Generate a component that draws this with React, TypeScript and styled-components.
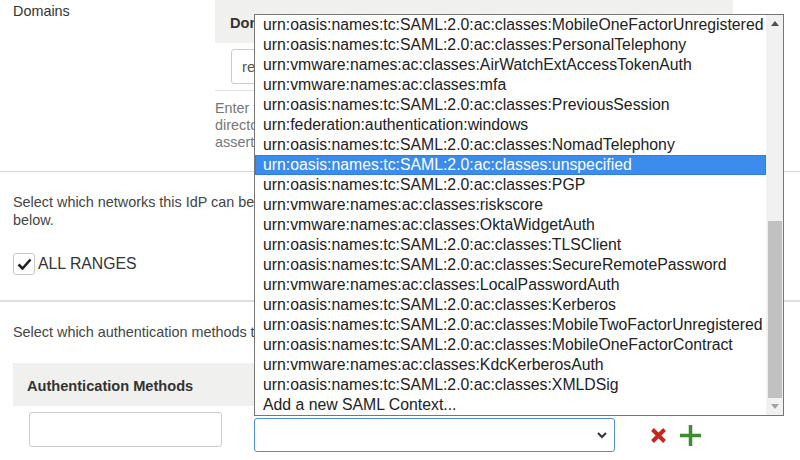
import styled, { createGlobalStyle, css } from 'styled-components'

const GlobalStyle = createGlobalStyle`
  html, body {
    margin: 0;
    padding: 0;
    background: #fff;
  }
  body {
    font-family: 'Liberation Sans', Arial, sans-serif;
    color: #333;
  }
`

const contexts = [
  'urn:oasis:names:tc:SAML:2.0:ac:classes:MobileOneFactorUnregistered',
  'urn:oasis:names:tc:SAML:2.0:ac:classes:PersonalTelephony',
  'urn:vmware:names:ac:classes:AirWatchExtAccessTokenAuth',
  'urn:vmware:names:ac:classes:mfa',
  'urn:oasis:names:tc:SAML:2.0:ac:classes:PreviousSession',
  'urn:federation:authentication:windows',
  'urn:oasis:names:tc:SAML:2.0:ac:classes:NomadTelephony',
  'urn:oasis:names:tc:SAML:2.0:ac:classes:unspecified',
  'urn:oasis:names:tc:SAML:2.0:ac:classes:PGP',
  'urn:vmware:names:ac:classes:riskscore',
  'urn:vmware:names:ac:classes:OktaWidgetAuth',
  'urn:oasis:names:tc:SAML:2.0:ac:classes:TLSClient',
  'urn:oasis:names:tc:SAML:2.0:ac:classes:SecureRemotePassword',
  'urn:vmware:names:ac:classes:LocalPasswordAuth',
  'urn:oasis:names:tc:SAML:2.0:ac:classes:Kerberos',
  'urn:oasis:names:tc:SAML:2.0:ac:classes:MobileTwoFactorUnregistered',
  'urn:oasis:names:tc:SAML:2.0:ac:classes:MobileOneFactorContract',
  'urn:vmware:names:ac:classes:KdcKerberosAuth',
  'urn:oasis:names:tc:SAML:2.0:ac:classes:XMLDSig',
  'Add a new SAML Context...',
]

const Page = styled.div`
  position: relative;
  width: 800px;
  height: 460px;
  overflow: hidden;
`

const DomainsSection = styled.section`
  display: grid;
  grid-template-columns: 215px 518px;
  height: 171px;
  border-bottom: 1px solid #d9d9d9;
`

const FieldLabel = styled.div`
  padding: 3px 0 0 13px;
  font-size: 14.4px;
  line-height: 17px;
`

const TableHead = styled.div<{ indent?: number }>`
  height: 43px;
  background: #f0f1ef;
  display: flex;
  align-items: center;
  justify-content: space-between;
  padding: 2px 12px 0 ${({ indent }) => indent ?? 15}px;
  box-sizing: border-box;
  font-size: 14.6px;
  font-weight: bold;
  color: #333;
`

const InputRow = styled.div`
  padding: 6px 0 6px 16px;
  border-bottom: 1px solid #e2e2e2;
`

const TextInput = styled.input<{ w: number }>`
  ${({ w }) => css`
    width: ${w}px;
  `}
  height: 35px;
  box-sizing: border-box;
  border: 1px solid #ccc;
  border-radius: 3px;
  padding: 0 10px;
  font-family: inherit;
  font-size: 15px;
  color: #555;
`

// clipped at the open dropdown's edge, where the reference cuts these texts
const Clip = styled.div<{ w: number }>`
  width: ${({ w }) => w}px;
  overflow: hidden;
  white-space: nowrap;
`

const HelpText = styled.p`
  margin: 0;
  padding-top: 9px;
  font-size: 14.4px;
  line-height: 17px;
  color: #777;
`

const NetworksSection = styled.section`
  height: 130px;
  padding: 21px 13px 0;
  box-sizing: border-box;
  border-bottom: 2px solid #dedede;
`

const Intro = styled.p`
  margin: 0;
  font-size: 14.4px;
  line-height: 18px;
  color: #444;
`

const CheckRow = styled.label`
  display: flex;
  align-items: center;
  gap: 3px;
  margin-top: 24px;
  font-size: 15.8px;
  color: #333;
`

const CheckBox = styled.span`
  width: 22px;
  height: 22px;
  box-sizing: border-box;
  border: 1px solid #c8c8c8;
  border-radius: 3px;
  display: flex;
  align-items: center;
  justify-content: center;
  background: #fff;
`

const AuthSection = styled.section`
  padding: 21px 13px 0;
`

const MethodsHead = styled(TableHead)`
  margin-top: 22px;
  width: 720px;
`

const MethodRow = styled.div`
  display: flex;
  align-items: flex-start;
  padding-left: 16px;
  margin-top: 6px;
`

const SelectBox = styled.div`
  margin: 6px 0 0 32px;
  width: 361px;
  height: 34px;
  box-sizing: border-box;
  border: 1px solid #4d90e0;
  border-radius: 3px;
  display: flex;
  align-items: center;
  justify-content: flex-end;
  padding-right: 6px;
`

const RowActions = styled.div`
  display: flex;
  align-items: center;
  gap: 13px;
  margin: 13px 0 0 35px;
`

const Dropdown = styled.div`
  position: absolute;
  left: 254px;
  top: 14px;
  width: 530px;
  height: 402px;
  box-sizing: border-box;
  border: 1px solid #767676;
  background: #fff;
  display: flex;
`

const OptionList = styled.ul`
  list-style: none;
  margin: 0;
  padding: 0;
  flex: 1;
`

const Option = styled.li<{ selected?: boolean }>`
  height: 20px;
  line-height: 20px;
  padding-left: 8px;
  font-size: 15.8px;
  white-space: nowrap;
  overflow: hidden;
  color: #222;
  ${({ selected }) =>
    selected &&
    css`
      background: #3b8cec;
      color: #fff;
      box-shadow: inset 0 0 0 1px #2f7fe0;
    `}
`

const ScrollTrack = styled.div`
  width: 17px;
  background: #f1f1f1;
  display: flex;
  flex-direction: column;
  align-items: center;
`

const ScrollArrow = styled.div`
  height: 17px;
  display: flex;
  align-items: center;
  justify-content: center;
`

const ScrollThumb = styled.div`
  width: 14px;
  height: 177px;
  margin-top: auto;
  background: #c1c1c1;
`

const Chevron = () => (
  <svg width="12" height="8" viewBox="0 0 12 8">
    <path d="M2 2l4 4 4-4" fill="none" stroke="#333" strokeWidth="2" />
  </svg>
)

const RemoveIcon = () => (
  <svg width="17" height="17" viewBox="0 0 17 17">
    <path d="M2.5 2.5l12 12M14.5 2.5l-12 12" stroke="#c8261b" strokeWidth="4" />
  </svg>
)

const AddIcon = ({ size = 21 }: { size?: number }) => (
  <svg width={size} height={size} viewBox="0 0 21 21">
    <path d="M10.5 0v21M0 10.5h21" stroke="#3c8d2f" strokeWidth="3.5" />
  </svg>
)

const Check = () => (
  <svg width="15" height="12" viewBox="0 0 15 12">
    <path d="M1.5 6.5l4 4 8-9" fill="none" stroke="#222" strokeWidth="2.6" />
  </svg>
)

const Arrow = ({ up }: { up?: boolean }) => (
  <svg width="8" height="5" viewBox="0 0 8 5">
    <path d={up ? 'M0 5h8L4 0z' : 'M0 0h8L4 5z'} fill={up ? '#505050' : '#a3a3a3'} />
  </svg>
)

export default function App() {
  return (
    <Page>
      <GlobalStyle />

      <DomainsSection>
        <FieldLabel>Domains</FieldLabel>
        <div>
          <TableHead>
            <Clip w={24}>Domains</Clip>
            <AddIcon size={18} />
          </TableHead>
          <InputRow>
            <TextInput w={360} defaultValue="realm.local" />
          </InputRow>
          <Clip w={39}>
            <HelpText>
              Enter the domains handled by this IdP.
              <br />
              directory domain matches are sent here for
              <br />
              assertion of their identity.
            </HelpText>
          </Clip>
        </div>
      </DomainsSection>

      <NetworksSection>
        <Clip w={241}>
          <Intro>
            Select which networks this IdP can be used from.
            <br />
            below.
          </Intro>
        </Clip>
        <CheckRow>
          <CheckBox>
            <Check />
          </CheckBox>
          ALL RANGES
        </CheckRow>
      </NetworksSection>

      <AuthSection>
        <Clip w={241}>
          <Intro>Select which authentication methods this IdP supports.</Intro>
        </Clip>
        <MethodsHead indent={14}>Authentication Methods</MethodsHead>
        <MethodRow>
          <TextInput w={193} />
          <SelectBox>
            <Chevron />
          </SelectBox>
          <RowActions>
            <RemoveIcon />
            <AddIcon />
          </RowActions>
        </MethodRow>
      </AuthSection>

      <Dropdown>
        <OptionList>
          {contexts.map((c, i) => (
            <Option key={c} selected={i === 7}>
              {c}
            </Option>
          ))}
        </OptionList>
        <ScrollTrack>
          <ScrollArrow>
            <Arrow up />
          </ScrollArrow>
          <ScrollThumb />
          <ScrollArrow>
            <Arrow />
          </ScrollArrow>
        </ScrollTrack>
      </Dropdown>
    </Page>
  )
}
